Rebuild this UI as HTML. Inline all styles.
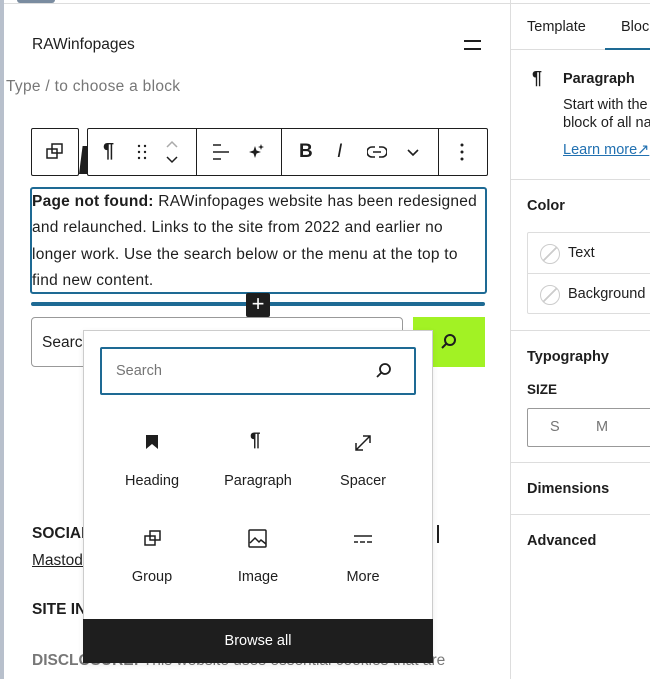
<!DOCTYPE html>
<html><head><style>
*{margin:0;padding:0;box-sizing:border-box}
body{width:650px;height:679px;overflow:hidden;background:#fff;font-family:"Liberation Sans",sans-serif;color:#1e1e1e;position:relative}
.a{position:absolute;white-space:nowrap}
.ic{position:absolute}
</style></head><body>
<div class="a" style="left:0;top:0;width:4px;height:679px;background:#b8c0cc"></div>
<div class="a" style="left:4px;top:3px;width:506px;height:1px;background:#ddd"></div>
<div class="a" style="left:17px;top:0;width:38px;height:3px;background:#7a8ca0;border-radius:0 0 6px 6px"></div>

<div class="a" style="left:32px;top:36px;font-size:15.5px">RAWinfopages</div>
<div class="a" style="left:464px;top:40px;width:17px;height:2px;background:#1e1e1e"></div>
<div class="a" style="left:464px;top:48px;width:17px;height:2px;background:#1e1e1e"></div>
<div class="a" style="left:6px;top:78px;font-size:15.5px;color:#777;letter-spacing:0.3px">Type / to choose a block</div>

<!-- toolbar -->
<div class="a" style="left:31px;top:128px;width:48px;height:48px;border:1px solid #1e1e1e;border-radius:2px;background:#fff"></div>
<svg class="ic" style="left:46px;top:143px" width="18" height="18" viewBox="0 0 18 18" fill="none" stroke="#1e1e1e" stroke-width="1.5"><rect x="1" y="6" width="10" height="9"/><rect x="6" y="1" width="10" height="9"/></svg>
<div class="a" style="left:79px;top:146px;width:9px;height:28px;background:#1e1e1e;clip-path:polygon(40% 0,100% 0,100% 100%,0 100%)"></div>
<div class="a" style="left:87px;top:128px;width:401px;height:48px;border:1px solid #1e1e1e;border-radius:2px;background:#fff"></div>
<div class="a" style="left:196px;top:128px;width:1px;height:48px;background:#1e1e1e"></div>
<div class="a" style="left:281px;top:128px;width:1px;height:48px;background:#1e1e1e"></div>
<div class="a" style="left:438px;top:128px;width:1px;height:48px;background:#1e1e1e"></div>
<div class="a" style="left:103px;top:140px;font-size:20px;font-weight:bold">¶</div>
<svg class="ic" style="left:136px;top:144px" width="12" height="16"><g fill="#1e1e1e"><circle cx="3" cy="2" r="1.2"/><circle cx="9" cy="2" r="1.2"/><circle cx="3" cy="8" r="1.2"/><circle cx="9" cy="8" r="1.2"/><circle cx="3" cy="14" r="1.2"/><circle cx="9" cy="14" r="1.2"/></g></svg>
<svg class="ic" style="left:164px;top:140px" width="16" height="24" fill="none" stroke-width="1.5"><path d="M3 7l5-5 5 5" stroke="#aaa"/><path d="M3 17l5 5 5-5" stroke="#1e1e1e"/></svg>
<svg class="ic" style="left:212px;top:143px" width="20" height="18" stroke="#1e1e1e" stroke-width="1.5"><path d="M1 2h8M1 9h16M1 16h8"/></svg>
<svg class="ic" style="left:248px;top:143px" width="18" height="18" fill="#1e1e1e"><path d="M7 3l1.5 4.5L13 9l-4.5 1.5L7 15l-1.5-4.5L1 9l4.5-1.5z"/><path d="M13 1l.8 2.2L16 4l-2.2.8L13 7l-.8-2.2L10 4l2.2-.8z"/></svg>
<div class="a" style="left:299px;top:141px;font-size:19px;font-weight:bold">B</div>
<div class="a" style="left:337px;top:141px;font-size:19px;font-style:italic">I</div>
<svg class="ic" style="left:367px;top:145px" width="20" height="14" fill="none" stroke="#1e1e1e" stroke-width="1.6"><path d="M8 2H5a5 5 0 000 10h3M12 2h3a5 5 0 010 10h-3M6 7h8"/></svg>
<svg class="ic" style="left:406px;top:148px" width="14" height="10" fill="none" stroke="#1e1e1e" stroke-width="1.6"><path d="M2 2l5 5 5-5"/></svg>
<svg class="ic" style="left:460px;top:143px" width="4" height="18" fill="#1e1e1e"><circle cx="2" cy="2" r="1.5"/><circle cx="2" cy="9" r="1.5"/><circle cx="2" cy="16" r="1.5"/></svg>

<!-- paragraph -->
<div class="a" style="left:30px;top:187px;width:457px;height:107px;border:2px solid #1e6a94;border-radius:3px"></div>
<div class="a" style="left:32px;top:189px;font-size:15.5px;line-height:26.3px;letter-spacing:0.25px;color:#1e1e1e"><b>Page not found:</b> RAWinfopages website has been redesigned<br>and relaunched. Links to the site from 2022 and earlier no<br>longer work. Use the search below or the menu at the top to<br>find new content.</div>
<div class="a" style="left:31px;top:302px;width:454px;height:4px;background:#1e6a94;border-radius:2px"></div>
<div class="a" style="left:246px;top:293px;width:24px;height:24px;background:#1e1e1e;border-radius:2px;color:#fff;font-size:22px;line-height:22px;text-align:center">+</div>

<!-- page search -->
<div class="a" style="left:31px;top:317px;width:372px;height:50px;border:1px solid #999;border-radius:4px"></div>
<div class="a" style="left:42px;top:334px;font-size:15.5px">Search</div>
<div class="a" style="left:413px;top:317px;width:72px;height:50px;background:#a2f224"></div>
<svg class="ic" style="left:440px;top:333px" width="18" height="18" fill="none" stroke="#1e1e1e" stroke-width="2"><circle cx="10" cy="7" r="5"/><path d="M6.5 10.5L2 15"/></svg>

<div class="a" style="left:32px;top:525px;font-size:15.5px;font-weight:bold">SOCIAL</div>
<div class="a" style="left:32px;top:552px;font-size:15.5px;text-decoration:underline">Mastodon</div>
<div class="a" style="left:437px;top:525px;width:2px;height:18px;background:#1e1e1e"></div>
<div class="a" style="left:32px;top:601px;font-size:15.5px;font-weight:bold">SITE INFO</div>
<div class="a" style="left:32px;top:652px;font-size:15.5px;color:#777"><b>DISCLOSURE:</b> This website uses essential cookies that are</div>

<!-- popup -->
<div class="a" style="left:83px;top:330px;width:350px;height:333px;background:#fff;border:1px solid #ccc;box-shadow:0 2px 6px rgba(0,0,0,.08)"></div>
<div class="a" style="left:100px;top:347px;width:316px;height:48px;border:2px solid #1e6a94;border-radius:2px"></div>
<div class="a" style="left:116px;top:363px;font-size:14.5px;color:#757575">Search</div>
<svg class="ic" style="left:375px;top:362px" width="18" height="18" fill="none" stroke="#1e1e1e" stroke-width="1.8"><circle cx="10" cy="7" r="5"/><path d="M6.5 10.5L2 15"/></svg>
<svg class="ic" style="left:146px;top:435px" width="12" height="14" fill="#1e1e1e"><path d="M0 0h12v14L6 9 0 14z"/></svg>
<div class="a" style="left:250px;top:430px;font-size:19px;font-weight:bold">¶</div>
<svg class="ic" style="left:354px;top:434px" width="18" height="18" fill="none" stroke="#1e1e1e" stroke-width="1.5"><path d="M2 16L16 2M9 2h7v7M2 9v7h7"/></svg>
<svg class="ic" style="left:144px;top:530px" width="18" height="18" fill="none" stroke="#1e1e1e" stroke-width="1.5"><rect x="1" y="6" width="10" height="9"/><rect x="6" y="1" width="10" height="9"/></svg>
<svg class="ic" style="left:248px;top:529px" width="20" height="20" fill="none" stroke="#1e1e1e" stroke-width="1.5"><rect x="1" y="1" width="17" height="17" rx="1"/><path d="M2 14l5-5 4 4 2-2 5 4"/></svg>
<svg class="ic" style="left:354px;top:534px" width="18" height="10" stroke="#1e1e1e" stroke-width="1.5"><path d="M0 2h18"/><path d="M0 8h4M6 8h5M13 8h5"/></svg>
<div class="a" style="left:152px;top:473px;font-size:14.5px;transform:translateX(-50%)">Heading</div>
<div class="a" style="left:258px;top:473px;font-size:14.5px;transform:translateX(-50%)">Paragraph</div>
<div class="a" style="left:363px;top:473px;font-size:14.5px;transform:translateX(-50%)">Spacer</div>
<div class="a" style="left:152px;top:569px;font-size:14.5px;transform:translateX(-50%)">Group</div>
<div class="a" style="left:258px;top:569px;font-size:14.5px;transform:translateX(-50%)">Image</div>
<div class="a" style="left:363px;top:569px;font-size:14.5px;transform:translateX(-50%)">More</div>
<div class="a" style="left:83px;top:619px;width:350px;height:44px;background:#1e1e1e;color:#fff;font-size:14.5px;text-align:center;line-height:44px">Browse all</div>

<!-- sidebar -->
<div class="a" style="left:510px;top:0;width:1px;height:679px;background:#ddd"></div>
<div class="a" style="left:511px;top:3px;width:139px;height:1px;background:#ddd"></div>
<div class="a" style="left:527px;top:19px;font-size:14.5px">Template</div>
<div class="a" style="left:621px;top:19px;font-size:14.5px">Block</div>
<div class="a" style="left:511px;top:49px;width:139px;height:1px;background:#ddd"></div>
<div class="a" style="left:605px;top:48px;width:45px;height:2px;background:#1e6a94"></div>
<div class="a" style="left:532px;top:68px;font-size:18px;font-weight:bold">¶</div>
<div class="a" style="left:563px;top:71px;font-size:14.5px;font-weight:bold">Paragraph</div>
<div class="a" style="left:563px;top:96px;font-size:14.5px;line-height:18px">Start with the<br>block of all na</div>
<div class="a" style="left:563px;top:142px;font-size:14.5px;color:#2271b1;text-decoration:underline">Learn more↗</div>
<div class="a" style="left:511px;top:179px;width:139px;height:1px;background:#ddd"></div>
<div class="a" style="left:527px;top:198px;font-size:14.5px;font-weight:bold">Color</div>
<div class="a" style="left:527px;top:232px;width:130px;height:82px;border:1px solid #ddd;border-radius:2px"></div>
<div class="a" style="left:528px;top:273px;width:122px;height:1px;background:#ddd"></div>
<div class="a" style="left:540px;top:244px;width:20px;height:20px;border:1px solid #ccc;border-radius:50%;background:linear-gradient(135deg,transparent 47%,#ccc 47%,#ccc 53%,transparent 53%)"></div>
<div class="a" style="left:540px;top:285px;width:20px;height:20px;border:1px solid #ccc;border-radius:50%;background:linear-gradient(135deg,transparent 47%,#ccc 47%,#ccc 53%,transparent 53%)"></div>
<div class="a" style="left:568px;top:245px;font-size:14.5px">Text</div>
<div class="a" style="left:568px;top:286px;font-size:14.5px">Background</div>
<div class="a" style="left:511px;top:330px;width:139px;height:1px;background:#ddd"></div>
<div class="a" style="left:527px;top:349px;font-size:14.5px;font-weight:bold">Typography</div>
<div class="a" style="left:527px;top:382px;font-size:13.5px;font-weight:bold">SIZE</div>
<div class="a" style="left:527px;top:408px;width:130px;height:39px;border:1px solid #999;border-radius:2px"></div>
<div class="a" style="left:550px;top:419px;font-size:14.5px;color:#757575">S</div>
<div class="a" style="left:596px;top:419px;font-size:14.5px;color:#757575">M</div>
<div class="a" style="left:511px;top:462px;width:139px;height:1px;background:#ddd"></div>
<div class="a" style="left:527px;top:481px;font-size:14.5px;font-weight:bold">Dimensions</div>
<div class="a" style="left:511px;top:514px;width:139px;height:1px;background:#ddd"></div>
<div class="a" style="left:527px;top:533px;font-size:14.5px;font-weight:bold">Advanced</div>
</body></html>
